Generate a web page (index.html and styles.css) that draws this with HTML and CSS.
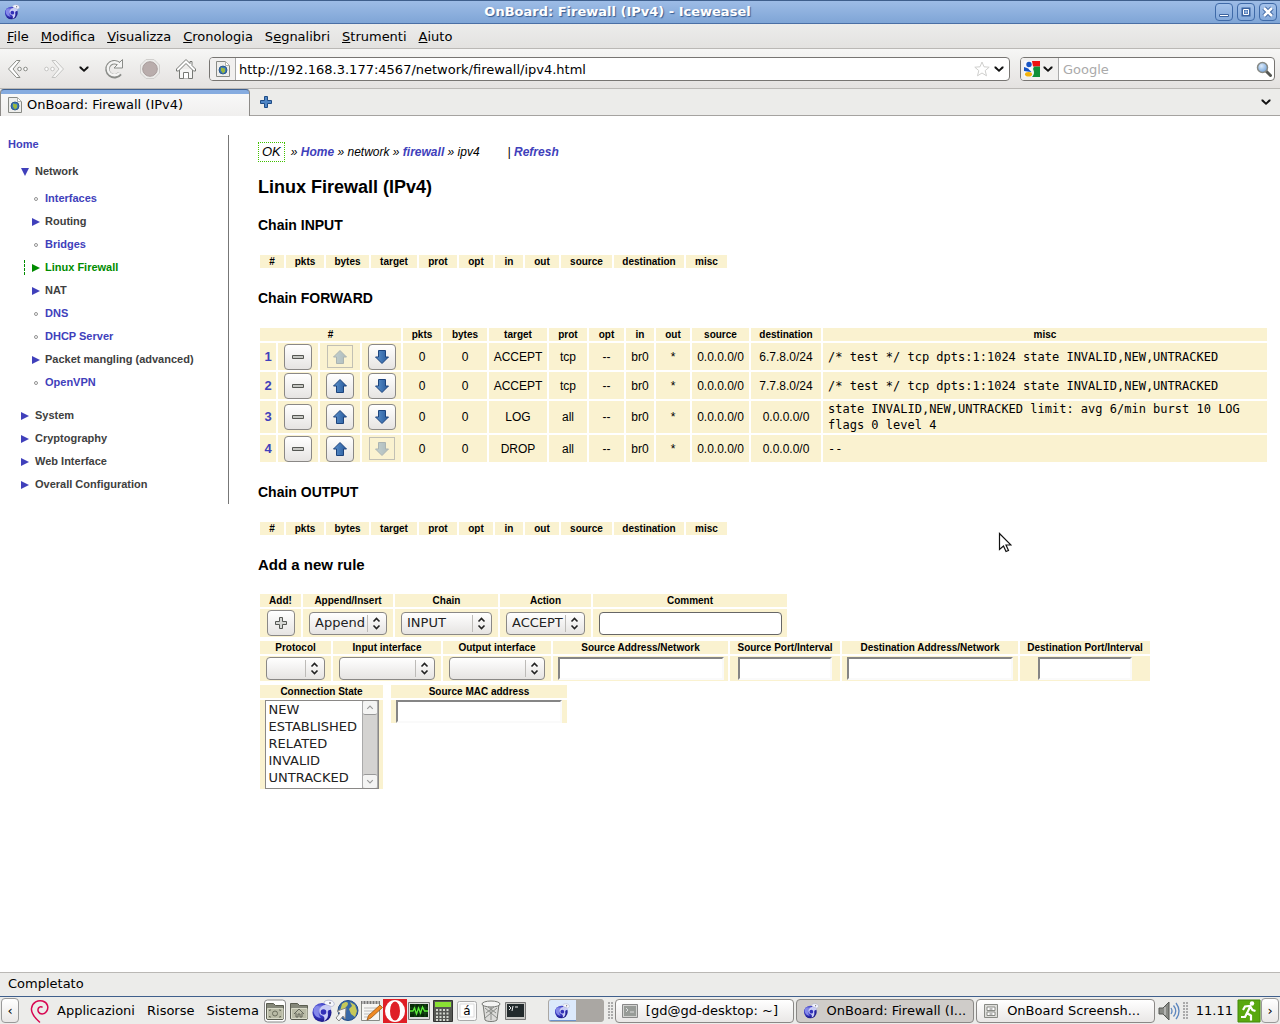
FILE: index.html
```html
<!DOCTYPE html>
<html lang="it">
<head>
<meta charset="utf-8">
<title>OnBoard: Firewall (IPv4)</title>
<link rel="stylesheet" href="styles.css">
</head>
<body>
<svg class="defs" aria-hidden="true">
  <defs>
    <linearGradient id="blueArrow" x1="0" y1="0" x2="1" y2="0"><stop offset="0" stop-color="#5c92cc"/><stop offset="1" stop-color="#275a9c"/></linearGradient>
    <radialGradient id="sphere" cx=".4" cy=".35" r=".7"><stop offset="0" stop-color="#a9adf0"/><stop offset=".5" stop-color="#3b3cc8"/><stop offset="1" stop-color="#15127a"/></radialGradient>
    <radialGradient id="lens" cx=".4" cy=".35" r=".7"><stop offset="0" stop-color="#dcebfb"/><stop offset="1" stop-color="#6d9fd8"/></radialGradient>
  </defs>
  <symbol id="i-weasel" viewBox="0 0 24 24">
    <circle cx="11" cy="13.500" r="9.500" fill="url(#sphere)"/>
    <path d="M3 9c3-4 6-2 5 1s-1 6 2 9c-5 0-9-5-7-10z" fill="#8488ea"/>
    <path d="M10 8c3-3 8-3 10 0 1 2 0 3-2 3-2 1-1 3-1 5 0 3-2 5-4 6 1-4 0-5-3-6-2-2-2-5 0-8z" fill="#c9ccf6"/>
    <circle cx="12.500" cy="13" r="2.800" fill="#3230b8"/>
    <path d="M13 3c3-3 9-2 10 1s-2 4-4 3-6-1-6-4z" fill="#f6f7fd" stroke="#9a9fc4" stroke-width=".6"/>
    <circle cx="19" cy="4" r=".8" fill="#222"/>
  </symbol>
  <symbol id="i-page" viewBox="0 0 16 18">
    <path d="M1.500 1.500h9l4 4v11h-13z" fill="#eeeeec" stroke="#888a85"/>
    <path d="M10.500 1.500v4h4z" fill="#fff" stroke="#b0b2ad"/>
    <circle cx="8" cy="10" r="4" fill="#3a77b8" stroke="#1d4a7e" stroke-width=".8"/>
    <path d="M6 7.500l4 1v3l-2 2-2-3z" fill="#9ab83c"/>
  </symbol>
  <symbol id="i-chev" viewBox="0 0 12 8"><path d="M1.500 1.500h1.500l3 3 3-3h1.500v1.500L6 7 1.500 3z" fill="#111"/></symbol>
  <symbol id="i-up" viewBox="0 0 16 16"><path d="M8 1.500l6.500 6.500h-3v6.500h-7V8h-3z" fill="url(#blueArrow)" stroke="#1c437c"/></symbol>
  <symbol id="i-down" viewBox="0 0 16 16"><path d="M8 14.500l6.500-6.500h-3V1.500h-7V8h-3z" fill="url(#blueArrow)" stroke="#1c437c"/></symbol>
  <symbol id="i-minus" viewBox="0 0 16 16"><path d="M2.500 6.500h11v3h-11z" fill="#c5c6c2" stroke="#555753"/></symbol>
  <symbol id="i-plus" viewBox="0 0 16 16"><path d="M6.500 2.500h3v4h4v3h-4v4h-3v-4h-4v-3h4z" fill="#d6d7d4" stroke="#555753"/></symbol>
  <symbol id="i-spin" viewBox="0 0 20 21"><path d="M.5 2v17" stroke="#bdbbb8"/><path d="M6.500 8.500l3-3 3 3M6.500 12.500l3 3 3-3" fill="none" stroke="#222" stroke-width="1.600"/></symbol>
  <symbol id="i-right" viewBox="0 0 8 8"><path d="M0 0l8 4-8 4z" fill="currentColor"/></symbol>
  <symbol id="i-open" viewBox="0 0 8 8"><path d="M0 0h8l-4 8z" fill="currentColor"/></symbol>
  <symbol id="i-dot" viewBox="0 0 8 8"><circle cx="4" cy="4" r="1.500" fill="none" stroke="#777" stroke-width=".8"/></symbol>
  <symbol id="i-folder" viewBox="0 0 24 24"><path d="M3.500 18V4.500h7l2 2h8V19a1.500 1.500 0 0 1-1.500 1.500H5A1.500 1.500 0 0 1 3.500 19z" fill="#85887a" stroke="#5a5d50"/><path d="M4.500 9.500h15.500v10h-15.500z" fill="#b9bba6" stroke="#d8dac8"/></symbol>
</svg>

<header class="titlebar">
  <svg class="s16"><use href="#i-weasel"/></svg>
  <span class="title">OnBoard: Firewall (IPv4) - Iceweasel</span>
  <div class="winbtns">
    <button aria-label="Riduci"><svg viewBox="0 0 16 16"><path d="M3.500 10.500h9v2h-9z" fill="#fff" stroke="#3a63a0"/></svg></button>
    <button aria-label="Ingrandisci"><svg viewBox="0 0 16 16"><path d="M5 5h6v6H5z" fill="none" stroke="#3a63a0" stroke-width="3"/><path d="M5.500 5.500h5v5h-5z" fill="none" stroke="#fff"/></svg></button>
    <button aria-label="Chiudi"><svg viewBox="0 0 16 16"><path d="M4 4l8 8M12 4l-8 8" stroke="#3a63a0" stroke-width="4.500"/><path d="M4 4l8 8M12 4l-8 8" stroke="#fff" stroke-width="2.500"/></svg></button>
  </div>
</header>

<nav class="menubar">
  <span><u>F</u>ile</span><span><u>M</u>odifica</span><span><u>V</u>isualizza</span><span><u>C</u>ronologia</span><span>S<u>e</u>gnalibri</span><span><u>S</u>trumenti</span><span><u>A</u>iuto</span>
</nav>

<div class="toolbar">
  <button class="tool" aria-label="Indietro"><svg class="s22" viewBox="0 0 22 22"><path d="M9.500 2.500h3.500l-7 8.500 7 8.500H9.500L1.500 11z" fill="#fff" stroke="#888a85"/><circle cx="12.500" cy="11" r="1.800" fill="#fff" stroke="#888a85"/><circle cx="18.500" cy="11" r="1.800" fill="#fff" stroke="#888a85"/></svg></button>
  <button class="tool fwd" aria-label="Avanti"><svg class="s22" viewBox="0 0 22 22"><path d="M12.500 2.500H9l7 8.500-7 8.500h3.500l8-8.500z" fill="#f6f6f5" stroke="#c4c4c2"/><circle cx="3.500" cy="11" r="1.800" fill="#fff" stroke="#c4c4c2"/><circle cx="9.500" cy="11" r="1.800" fill="#fff" stroke="#c4c4c2"/></svg></button>
  <button class="tool hist" aria-label="Cronologia recente"><svg class="chev"><use href="#i-chev"/></svg></button>
  <button class="tool" aria-label="Ricarica"><svg class="s22" viewBox="0 0 22 22"><path d="M17 15.500A7 7 0 1 1 15.500 5.500" fill="none" stroke="#8a8c88" stroke-width="4.500"/><path d="M19.500 1.500v8.500h-8.500z" fill="#f4f4f3" stroke="#8a8c88"/><path d="M16.500 15A6.600 6.600 0 1 1 16.500 6.500" fill="none" stroke="#f4f4f3" stroke-width="2.500"/></svg></button>
  <button class="tool" aria-label="Interrompi"><svg class="s22" viewBox="0 0 22 22"><path d="M7 1.500h8l5.500 5.500v8l-5.500 5.500H7L1.500 15V7z" fill="#ececea" stroke="#d0cfcd"/><circle cx="11" cy="11" r="7.300" fill="#b9adac" stroke="#a99d9c"/></svg></button>
  <button class="tool" aria-label="Pagina iniziale"><svg class="s22" viewBox="0 0 22 22"><path d="M4.500 11v9.500h13V11" fill="#f6f6f5" stroke="#777975"/><path d="M11 1.500L1.500 11v2h2L11 5.500l7.500 7.500h2v-2L17 7.500v-4h-2v2z" fill="#fff" stroke="#777975"/><path d="M8.500 20.500v-6h5v6" fill="#fff" stroke="#777975"/></svg></button>
  <div class="field url">
    <span class="site"><svg class="favicon"><use href="#i-page"/></svg></span>
    <input type="text" aria-label="Indirizzo" value="http://192.168.3.177:4567/network/firewall/ipv4.html">
    <svg class="s16" viewBox="0 0 16 16"><path d="M8 1l2 4.800 5.200.4-4 3.400 1.300 5.200L8 12l-4.500 2.800 1.300-5.200-4-3.400L6 5.800z" fill="#fff" stroke="#cfcfcd"/></svg>
    <svg class="chev"><use href="#i-chev"/></svg>
  </div>
  <div class="field search">
    <span class="engine"><svg class="s16" viewBox="0 0 16 16"><path d="M0 0h16v16H0z" fill="#f4f6fb"/><path d="M8 0h8v5.500H9z" fill="#ee1111"/><path d="M10 5.500h6V16H8c3-3 2-6 1-8z" fill="#109038"/><circle cx="5" cy="3.500" r="2.700" fill="#1754c4"/><path d="M0 6l3 1c3 1 5 2 4 4L0 10z" fill="#1754c4"/><path d="M5 7l3 3" stroke="#fff" stroke-width="2"/><ellipse cx="4.500" cy="13.300" rx="3.500" ry="2.300" fill="#f4b20a"/></svg><svg class="chev"><use href="#i-chev"/></svg></span>
    <input type="text" aria-label="Cerca" placeholder="Google">
    <svg class="s16" viewBox="0 0 16 16"><path d="M10 10l4.500 4.500" stroke="#555753" stroke-width="3" stroke-linecap="round"/><circle cx="6.500" cy="6.500" r="5" fill="url(#lens)" stroke="#888a85" stroke-width="1.500"/></svg>
  </div>
</div>

<div class="tabs">
  <div class="tab"><svg class="favicon"><use href="#i-page"/></svg><span>OnBoard: Firewall (IPv4)</span></div>
  <button class="tool newtab" aria-label="Nuova scheda"><svg viewBox="0 0 14 14"><path d="M5.500 1.500h3v4h4v3h-4v4h-3v-4h-4v-3h4z" fill="#4f86c6" stroke="#1f4c86"/></svg></button>
  <button class="tool alltabs" aria-label="Elenca schede"><svg class="chev"><use href="#i-chev"/></svg></button>
</div>

<div class="page">
  <nav class="sidebar">
    <a class="home" href="#">Home</a>
    <ul class="tree">
      <li><span class="node"><svg><use href="#i-open"/></svg>Network</span>
        <ul>
          <li><a class="node" href="#"><svg><use href="#i-dot"/></svg>Interfaces</a></li>
          <li><span class="node"><svg><use href="#i-right"/></svg>Routing</span></li>
          <li><a class="node" href="#"><svg><use href="#i-dot"/></svg>Bridges</a></li>
          <li><a class="node current" href="#"><svg><use href="#i-right"/></svg>Linux Firewall</a></li>
          <li><span class="node"><svg><use href="#i-right"/></svg>NAT</span></li>
          <li><a class="node" href="#"><svg><use href="#i-dot"/></svg>DNS</a></li>
          <li><a class="node" href="#"><svg><use href="#i-dot"/></svg>DHCP Server</a></li>
          <li><span class="node"><svg><use href="#i-right"/></svg>Packet mangling (advanced)</span></li>
          <li><a class="node" href="#"><svg><use href="#i-dot"/></svg>OpenVPN</a></li>
        </ul>
      </li>
      <li><span class="node"><svg><use href="#i-right"/></svg>System</span></li>
      <li><span class="node"><svg><use href="#i-right"/></svg>Cryptography</span></li>
      <li><span class="node"><svg><use href="#i-right"/></svg>Web Interface</span></li>
      <li><span class="node"><svg><use href="#i-right"/></svg>Overall Configuration</span></li>
    </ul>
  </nav>

  <main class="content">
    <div class="crumbs"><span class="ok">OK</span><span>» <a href="#">Home</a> » network » <a href="#">firewall</a> » ipv4</span><span class="refresh">| <a href="#">Refresh</a></span></div>
    <h1>Linux Firewall (IPv4)</h1>

    <h2>Chain INPUT</h2>
    <table class="grid heads">
      <colgroup><col class="w24"><col class="w38"><col class="w43"><col class="w46"><col class="w38"><col class="w34"><col class="w28"><col class="w34"><col class="w51"><col class="w70"><col class="w41"></colgroup>
      <tr><th>#</th><th>pkts</th><th>bytes</th><th>target</th><th>prot</th><th>opt</th><th>in</th><th>out</th><th>source</th><th>destination</th><th>misc</th></tr>
    </table>

    <h2>Chain FORWARD</h2>
    <table class="grid rules">
      <colgroup><col class="w16"><col class="w40"><col class="w40"><col class="w39"><col class="w38"><col class="w44"><col class="w58"><col class="w38"><col class="w35"><col class="w28"><col class="w34"><col class="w57"><col class="w70"><col></colgroup>
      <tr><th colspan="4">#</th><th>pkts</th><th>bytes</th><th>target</th><th>prot</th><th>opt</th><th>in</th><th>out</th><th>source</th><th>destination</th><th>misc</th></tr>
      <tr><td class="num">1</td><td><button class="btn" aria-label="Delete rule 1"><svg><use href="#i-minus"/></svg></button></td><td><button class="btn" disabled aria-label="Move rule 1 up"><svg><use href="#i-up"/></svg></button></td><td><button class="btn" aria-label="Move rule 1 down"><svg><use href="#i-down"/></svg></button></td><td>0</td><td>0</td><td>ACCEPT</td><td>tcp</td><td>--</td><td>br0</td><td>*</td><td>0.0.0.0/0</td><td>6.7.8.0/24</td><td class="misc">/* test */ tcp dpts:1:1024 state INVALID,NEW,UNTRACKED</td></tr>
      <tr><td class="num">2</td><td><button class="btn" aria-label="Delete rule 2"><svg><use href="#i-minus"/></svg></button></td><td><button class="btn" aria-label="Move rule 2 up"><svg><use href="#i-up"/></svg></button></td><td><button class="btn" aria-label="Move rule 2 down"><svg><use href="#i-down"/></svg></button></td><td>0</td><td>0</td><td>ACCEPT</td><td>tcp</td><td>--</td><td>br0</td><td>*</td><td>0.0.0.0/0</td><td>7.7.8.0/24</td><td class="misc">/* test */ tcp dpts:1:1024 state INVALID,NEW,UNTRACKED</td></tr>
      <tr><td class="num">3</td><td><button class="btn" aria-label="Delete rule 3"><svg><use href="#i-minus"/></svg></button></td><td><button class="btn" aria-label="Move rule 3 up"><svg><use href="#i-up"/></svg></button></td><td><button class="btn" aria-label="Move rule 3 down"><svg><use href="#i-down"/></svg></button></td><td>0</td><td>0</td><td>LOG</td><td>all</td><td>--</td><td>br0</td><td>*</td><td>0.0.0.0/0</td><td>0.0.0.0/0</td><td class="misc">state INVALID,NEW,UNTRACKED limit: avg 6/min burst 10 LOG flags 0 level 4</td></tr>
      <tr><td class="num">4</td><td><button class="btn" aria-label="Delete rule 4"><svg><use href="#i-minus"/></svg></button></td><td><button class="btn" aria-label="Move rule 4 up"><svg><use href="#i-up"/></svg></button></td><td><button class="btn" disabled aria-label="Move rule 4 down"><svg><use href="#i-down"/></svg></button></td><td>0</td><td>0</td><td>DROP</td><td>all</td><td>--</td><td>br0</td><td>*</td><td>0.0.0.0/0</td><td>0.0.0.0/0</td><td class="misc">--</td></tr>
    </table>

    <h2>Chain OUTPUT</h2>
    <table class="grid heads">
      <colgroup><col class="w24"><col class="w38"><col class="w43"><col class="w46"><col class="w38"><col class="w34"><col class="w28"><col class="w34"><col class="w51"><col class="w70"><col class="w41"></colgroup>
      <tr><th>#</th><th>pkts</th><th>bytes</th><th>target</th><th>prot</th><th>opt</th><th>in</th><th>out</th><th>source</th><th>destination</th><th>misc</th></tr>
    </table>

    <h2 class="addrule">Add a new rule</h2>
    <form>
      <table class="grid r28">
        <colgroup><col class="w41"><col class="w90"><col class="w103"><col class="w91"><col class="w194"></colgroup>
        <tr><th><label for="add">Add!</label></th><th><label for="pos">Append/Insert</label></th><th><label for="chain">Chain</label></th><th><label for="action">Action</label></th><th><label for="comment">Comment</label></th></tr>
        <tr>
          <td><button type="button" class="btn" id="add" aria-label="Add!"><svg><use href="#i-plus"/></svg></button></td>
          <td><div class="sel"><select id="pos"><option>Append</option></select><svg><use href="#i-spin"/></svg></div></td>
          <td><div class="sel"><select id="chain"><option>INPUT</option></select><svg><use href="#i-spin"/></svg></div></td>
          <td><div class="sel"><select id="action"><option>ACCEPT</option></select><svg><use href="#i-spin"/></svg></div></td>
          <td><input type="text" class="comment" id="comment"></td>
        </tr>
      </table>
      <table class="grid r25">
        <colgroup><col class="w71"><col class="w108"><col class="w108"><col class="w175"><col class="w110"><col class="w176"><col class="w130"></colgroup>
        <tr><th><label for="proto">Protocol</label></th><th><label for="iif">Input interface</label></th><th><label for="oif">Output interface</label></th><th><label for="saddr">Source Address/Network</label></th><th><label for="sport">Source Port/Interval</label></th><th><label for="daddr">Destination Address/Network</label></th><th><label for="dport">Destination Port/Interval</label></th></tr>
        <tr>
          <td><div class="sel"><select id="proto"><option></option></select><svg><use href="#i-spin"/></svg></div></td>
          <td><div class="sel"><select id="iif"><option></option></select><svg><use href="#i-spin"/></svg></div></td>
          <td><div class="sel"><select id="oif"><option></option></select><svg><use href="#i-spin"/></svg></div></td>
          <td><input type="text" class="inset" id="saddr"></td>
          <td><input type="text" class="inset port" id="sport"></td>
          <td><input type="text" class="inset" id="daddr"></td>
          <td><input type="text" class="inset port" id="dport"></td>
        </tr>
      </table>
      <div class="pair">
        <table class="grid">
          <colgroup><col class="w123"></colgroup>
          <tr><th><label for="state">Connection State</label></th></tr>
          <tr><td><div class="list"><select id="state" multiple size="5"><option>NEW</option><option>ESTABLISHED</option><option>RELATED</option><option>INVALID</option><option>UNTRACKED</option></select>
            <div class="scroll"><span><svg viewBox="0 0 14 14"><path d="M4 8.500l3-3 3 3" fill="none" stroke="#999" stroke-width="1.200"/></svg></span><span><svg viewBox="0 0 14 14"><path d="M4 5.500l3 3 3-3" fill="none" stroke="#999" stroke-width="1.200"/></svg></span></div></div></td></tr>
        </table>
        <table class="grid">
          <colgroup><col class="w176"></colgroup>
          <tr><th><label for="mac">Source MAC address</label></th></tr>
          <tr><td><input type="text" class="inset" id="mac"></td></tr>
        </table>
      </div>
    </form>
  </main>
  <svg class="pointer" viewBox="0 0 14 21"><path d="M1.500 1.500v16l4-3.500 2.500 5.500 2.500-1-2.500-5.500h5z" fill="#fff" stroke="#111" stroke-width="1.200"/></svg>
</div>

<footer class="statusbar">Completato</footer>

<div class="panel">
  <button class="edge" aria-label="Nascondi a sinistra">‹</button>
  <nav class="menus">
    <svg class="swirl" viewBox="0 0 20 24"><path d="M9.500 23C5 19 1 14 1.500 9.500 2.500 3 8 1 12.500 2 18 3.500 19 9 16.500 12.500 14 16 10 15.500 8.500 13 7 10 9 7 12 8" fill="none" stroke="#d70751" stroke-width="1.500" stroke-linecap="round"/></svg>
    <span>Applicazioni</span><span>Risorse</span><span>Sistema</span>
  </nav>
  <div class="launch">
    <svg viewBox="0 0 24 24"><rect x="1.500" y="1" width="21" height="22" rx="3" fill="#fff" stroke="#888"/><use href="#i-folder"/><circle cx="12" cy="14.500" r="2.500" fill="none" stroke="#6a6d5c"/><path d="M6.500 12v-1h1.500M17.500 12v-1H16M6.500 17v1h1.500M17.500 17v1H16" fill="none" stroke="#6a6d5c"/></svg>
    <svg viewBox="0 0 24 24"><use href="#i-folder"/><path d="M7 15l5-5 5 5M9 14v4h2v-3h2v3h2v-4" fill="none" stroke="#64675a"/></svg>
    <svg viewBox="0 0 24 24"><use href="#i-weasel"/></svg>
    <svg viewBox="0 0 24 24"><circle cx="13" cy="11.500" r="10" fill="#3768a6" stroke="#204a87"/><path d="M7 5c4-3 6-2 6 0s-3 3-3 5-4 0-5 2zM15 3l5 3 2 6-2 6-4-3-2-5 3-3z" fill="#c6c95a"/><path d="M11 9L2 12l3 2-4 5 3 3 4-5 2 3z" fill="#f4f4f4" stroke="#888"/></svg>
    <svg viewBox="0 0 24 24"><path d="M2.500 3.500h18v18h-18z" fill="#f6f6f4" stroke="#888a85"/><path d="M2 2h19v3H2z" fill="#777"/><path d="M4 2v3M7 2v3M10 2v3M13 2v3M16 2v3M19 2v3" stroke="#eee"/><path d="M5 9h13M5 12h11M5 15h8M5 18h6" stroke="#bbb"/><path d="M21 6l2.500 2.500L12 19l-4 2 1.500-4.500z" fill="#f08a24" stroke="#8a4a0a" stroke-width=".7"/></svg>
    <svg viewBox="0 0 24 24"><path d="M0 0h24v24H0z" fill="#df1f26"/><ellipse cx="12" cy="12" rx="10" ry="11" fill="#fff"/><ellipse cx="12" cy="12" rx="5" ry="9.500" fill="#df1f26"/></svg>
    <svg viewBox="0 0 24 24"><path d="M1.500 3.500h21v17h-21z" fill="#ddd" stroke="#777"/><path d="M3 5h18v13H3z" fill="#062b06"/><path d="M3 9h18M3 14h18M8 5v13M13 5v13M18 5v13" stroke="#1a4d1a"/><path d="M3 12h3l1.500-3 2 6 2-6 2 5 2-6 2 4h3.500" fill="none" stroke="#5df03a" stroke-width="1.300"/></svg>
    <svg viewBox="0 0 24 24"><path d="M2.500 1.500h19v21h-19z" fill="#555753" stroke="#333"/><path d="M4 3h16v5H4z" fill="#8ae234"/><path d="M5 11h14M5 14.500h14M5 18h14M5 21h14" stroke="#d3d7cf" stroke-width="2" stroke-dasharray="2 1.500"/></svg>
    <svg viewBox="0 0 24 24"><rect x="2.500" y="2.500" width="19" height="19" rx="2" fill="#fafafa" stroke="#aaa"/><path d="M5 5h14v13H5z" fill="#fff" stroke="#ddd"/><text x="12" y="16" class="key">á</text></svg>
    <svg viewBox="0 0 24 24"><path d="M4 5h16l-2 16c-2 2-10 2-12 0z" fill="#dcdcda" stroke="#777975"/><ellipse cx="12" cy="5" rx="9" ry="3" fill="#f4f4f3" stroke="#777975"/><path d="M6 9l12 10M18 9L6 19M9 8l8 6M15 8l-8 6M12 8v13" stroke="#8a8c88"/></svg>
    <svg viewBox="0 0 24 24"><path d="M2.500 3.500h20v17h-20z" fill="#c8c8c5" stroke="#777"/><path d="M4 5h17v13H4z" fill="#222a2c"/><path d="M6 7l2 2-2 2M10 7l-1 5M12 8h3" stroke="#eee" fill="none"/></svg>
  </div>
  <div class="spaces"><span class="here"><svg class="s16"><use href="#i-weasel"/></svg></span><span></span></div>
  <i class="grip"></i>
  <div class="tasks">
    <button><svg class="s16" viewBox="0 0 16 16"><path d="M.5 1.500h15v13H.5z" fill="#d3d3d1" stroke="#888"/><path d="M2 3h12v10H2z" fill="#979b97"/><path d="M4 5l2 2-2 2M8 9h4" stroke="#ddd" fill="none"/></svg>[gd@gd-desktop: ~]</button>
    <button class="on"><svg class="s16"><use href="#i-weasel"/></svg>OnBoard: Firewall (I...</button>
    <button class="files"><svg class="s16" viewBox="0 0 16 16"><path d="M1.500 1.500h13v13h-13z" fill="#dededb" stroke="#888a85"/><path d="M4 4h8v3.500H4zM4 9h8v3.500H4z" fill="#fff" stroke="#888a85"/><path d="M6.500 6h3M6.500 11h3" stroke="#777"/></svg>OnBoard Screensh...</button>
  </div>
  <svg class="s24" viewBox="0 0 24 24"><path d="M2 9h4l6-6v18l-6-6H2z" fill="#888a85" stroke="#555753"/><path d="M8 8v8" stroke="#ddd"/><path d="M14 9q2 3 0 6M16.500 6.500q4.500 5.500 0 11M19 4q6 8 0 16" fill="none" stroke="#5c86be" stroke-width="1.300"/></svg>
  <i class="grip"></i>
  <time>11.11</time>
  <svg class="s24" viewBox="0 0 24 24"><path d="M1 1h22v22H1z" fill="#59a80f" stroke="#458a08"/><circle cx="15" cy="4.500" r="2.200" fill="#fff"/><path d="M6 11l2-3.500 5-.5 2.500 4 3 1M13 8l-3 6 4 2.500v5M10 14l-2 4H4" fill="none" stroke="#fff" stroke-width="2.200"/></svg>
  <button class="edge" aria-label="Nascondi a destra">›</button>
</div>
</body>
</html>
```
FILE: styles.css
```css
* { box-sizing: border-box; }
body {
  margin: 0;
  min-height: 100vh;
  display: flex;
  flex-direction: column;
  background: #fff;
  color: #000;
  font: 13px/16px "DejaVu Sans", sans-serif;
}
button, input, select { font: inherit; color: inherit; margin: 0; }
svg { display: block; flex: none; }
.defs { position: absolute; width: 0; height: 0; }
.s16 { width: 16px; height: 16px; }
.s22 { width: 22px; height: 22px; }
.s24 { width: 24px; height: 24px; }
.chev { width: 12px; height: 8px; }
.favicon { width: 16px; height: 18px; }

/* Window frame */
.titlebar {
  display: flex;
  align-items: center;
  height: 24px;
  padding: 0 3px 0 4px;
  border-top: 1px solid #3f5f8c;
  border-bottom: 1px solid #4a6fa5;
  background: linear-gradient(#9dbce6, #7fa5d6);
}
.title { flex: 1; text-align: center; color: #fff; font-weight: bold; text-shadow: 1px 1px 1px #355b91; }
.winbtns { display: flex; gap: 4px; }
.winbtns button {
  width: 18px; height: 18px; padding: 0;
  border: 1px solid #3f6aa8; border-radius: 4px;
  background: linear-gradient(#a4c2ea, #84a9da);
}
.winbtns svg { width: 16px; height: 16px; }
.menubar {
  display: flex;
  gap: 12px;
  align-items: center;
  height: 25px;
  padding: 2px 7px 0;
  border-bottom: 1px solid #bab8b5;
  background: linear-gradient(#ececeb, #e3e2e0);
}
.toolbar {
  display: flex;
  align-items: center;
  height: 40px;
  padding: 0 5px 0 7px;
  border-bottom: 1px solid #bab8b5;
  background: linear-gradient(#f6f6f5, #e4e2e0);
}
.tool { padding: 0; border: 0; background: none; margin-right: 14px; }
.fwd { margin-right: 13px; }
.hist { margin-right: 13px; }
.field {
  display: flex;
  align-items: center;
  height: 24px;
  border: 1px solid #777572;
  border-radius: 4px;
  background: #fff;
  overflow: hidden;
}
.field input { flex: 1; min-width: 0; height: 22px; border: 0; padding: 1px 0 0; background: none; outline: 0; }
.field input::placeholder { color: #aaa; opacity: 1; }
.url { flex: 1; gap: 3px; padding-right: 4px; margin: 0 10px 0 -2px; }
.search { width: 255px; gap: 4px; padding-right: 2px; }
.site { width: 26px; height: 22px; padding: 2px 5px; border-right: 1px solid #aaa; background: #f1f0ef; }
.engine { display: flex; align-items: center; gap: 2px; width: 38px; height: 22px; padding: 0 3px; border-right: 1px solid #aaa; background: #f1f0ef; }
.tabs {
  display: flex;
  align-items: center;
  height: 27px;
  border-bottom: 1px solid #a5a3a0;
  background: #ececea;
}
.tab {
  display: flex;
  align-items: center;
  gap: 4px;
  width: 250px;
  height: 27px;
  padding: 4px 6px 0;
  border: 1px solid #8d8b88;
  border-top: 1px solid #3f5f8c;
  border-bottom: 0;
  border-radius: 4px 4px 0 0;
  background: linear-gradient(#86ace0 4px, #f8f8f8 4px, #f0efee);
}
.newtab { margin: 0 0 0 9px; }
.newtab svg { width: 14px; height: 14px; }
.alltabs { margin: 0 8px 0 auto; }

/* Web page */
.page {
  flex: 1;
  position: relative;
  display: flex;
  align-items: flex-start;
  padding: 19px 11px 20px 0;
  font: 12px/16px "Liberation Sans", Arial, sans-serif;
}
.page a { color: #4040bb; text-decoration: none; }
.sidebar {
  flex: none;
  width: 229px;
  padding-bottom: 8px;
  border-right: 1px solid #777;
  color: #404040;
  font-size: 11px;
  font-weight: bold;
}
.home { display: block; padding-left: 8px; line-height: 19px; }
.sidebar ul { margin: 0; padding: 0; list-style: none; }
.sidebar .tree { margin-top: 6px; }
.tree ul { padding: 4px 0 10px; }
.tree li { line-height: 23px; }
.node { display: flex; align-items: center; gap: 6px; height: 23px; padding-left: 21px; }
.node svg { width: 8px; height: 8px; color: #4040bb; }
.tree ul .node { gap: 5px; padding-left: 32px; }
.tree ul .current { height: 15px; margin: 4px 0 4px 24px; padding-left: 7px; border-left: 1px dashed #008c00; color: #008c00; }
.sidebar .current svg { color: #008c00; }

.content { flex: 1; min-width: 0; padding: 7px 0 0 29px; }
.crumbs { display: flex; align-items: center; gap: 6px; font-style: italic; }
.crumbs a { font-weight: bold; }
.ok { padding: 1px 3px; border: 1px dotted #40c000; font-size: 13px; }
.refresh { margin-left: 22px; }
h1, h2 { margin: 18px 0; font-size: 14px; line-height: 20px; }
h1 { margin-top: 15px; font-size: 18px; }
.addrule { margin-bottom: 17px; font-size: 15px; }

.grid { table-layout: fixed; width: 0; border-spacing: 2px; text-align: center; }
.rules { width: 100%; }
.grid th, .grid td { padding: 0; background: #faf2d0; }
.grid th { height: 13px; font-size: 10px; line-height: 13px; white-space: nowrap; }
.rules td { height: 27px; }
.r28 td { height: 28px; }
.r25 td { height: 25px; }
.grid .num { color: #4040bb; font-size: 13px; font-weight: bold; }
.grid .misc { padding: 0 5px; text-align: left; font-family: "DejaVu Sans Mono", monospace; }

.w16 { width: 16px; } .w24 { width: 24px; } .w28 { width: 28px; } .w34 { width: 34px; }
.w35 { width: 35px; } .w38 { width: 38px; } .w39 { width: 39px; } .w40 { width: 40px; }
.w41 { width: 41px; } .w43 { width: 43px; } .w44 { width: 44px; } .w46 { width: 46px; }
.w51 { width: 51px; } .w57 { width: 57px; } .w58 { width: 58px; } .w70 { width: 70px; }
.w71 { width: 71px; } .w90 { width: 90px; } .w91 { width: 91px; } .w103 { width: 103px; }
.w108 { width: 108px; } .w110 { width: 110px; } .w123 { width: 123px; } .w130 { width: 130px; }
.w175 { width: 175px; } .w176 { width: 176px; } .w194 { width: 194px; }

.btn {
  display: block;
  width: 28px;
  height: 26px;
  margin: 0 auto;
  padding: 4px 5px;
  border: 1px solid #8a8886;
  border-radius: 4px;
  background: linear-gradient(#fff, #e6e4e2);
}
.btn svg { width: 16px; height: 16px; }
.btn:disabled { width: 26px; height: 23px; padding: 3px 4px; border-color: #c2c0b4; border-radius: 0; background: none; }
.btn:disabled svg { opacity: .35; }
.sel { display: grid; grid-template-columns: 1fr 20px; height: 23px; margin: 0 6px; }
.sel select {
  grid-area: 1 / 1 / 2 / 3;
  appearance: none;
  min-width: 0;
  padding: 0 0 0 5px;
  border: 1px solid #8a8886;
  border-radius: 4px;
  background: linear-gradient(#fff, #e6e4e2);
  font: 13px/16px "DejaVu Sans", sans-serif;
  color: #222;
}
.sel svg { grid-area: 1 / 2; align-self: center; width: 20px; height: 21px; pointer-events: none; }
.comment { display: block; width: 183px; height: 23px; margin: 0 auto; border: 1px solid #666; border-radius: 4px; background: #fff; }
.inset {
  display: block;
  width: 166px;
  height: 23px;
  margin: 0 auto;
  border: 2px solid;
  border-color: #858585 #fafafa #fafafa #858585;
  background: #fff;
}
.port { width: 94px; }
.pair { display: flex; align-items: flex-start; gap: 4px; }
.list { display: flex; width: 114px; height: 89px; margin: 0 auto; border: 1px solid #8a8886; background: #fff; }
.list select {
  flex: 1;
  min-width: 0;
  height: 87px;
  padding: 1px 0;
  border: 0;
  outline: 0;
  background: none;
  overflow: hidden;
  font: 13px/17px "DejaVu Sans", sans-serif;
  color: #222;
}
.list option { height: 17px; min-height: 17px; padding: 0 3px; }
.scroll { display: flex; flex-direction: column; justify-content: space-between; width: 16px; border: 1px solid #aaa; border-width: 0 1px; background: #d4d3d1; }
.scroll span { height: 14px; border: 1px solid #999; border-width: 0 0 1px; border-radius: 2px; background: #f4f4f3; }
.scroll span + span { border-width: 1px 0 0; }
.scroll svg { width: 14px; height: 13px; }
.pointer { position: absolute; left: 998px; top: 416px; width: 14px; height: 21px; }

/* Status bar and desktop panel */
.statusbar { height: 25px; padding: 3px 8px; border-top: 1px solid #bab8b5; border-bottom: 1px solid #3f5f8c; background: #ececea; }
.panel { display: flex; align-items: center; height: 27px; padding: 0 1px; background: #ececea; white-space: nowrap; }
.edge { width: 18px; height: 25px; padding: 0; border: 1px solid #999; border-radius: 4px; background: linear-gradient(#fff, #e9e7e6); }
.menus { display: flex; align-items: center; gap: 12px; margin: 0 4px 0 11px; }
.swirl { width: 20px; height: 24px; margin-right: -5px; }
.launch { display: flex; }
.launch svg { width: 24px; height: 24px; }
.key { font: 12px "DejaVu Sans", sans-serif; text-anchor: middle; }
.spaces { display: flex; width: 56px; height: 23px; margin: 0 2px 0 21px; border: 1px solid #aaa7a3; border-radius: 3px; background: #aaa7a3; overflow: hidden; }
.here { width: 27px; padding: 3px 5px; background: #dce9fb; border-bottom: 1px solid #6b92cb; }
.grip { width: 5px; height: 18px; margin: 0 2px; background: radial-gradient(circle at 1px 1px, #aaa 1px, transparent 1px) 0 0 / 3px 3px; }
.tasks { display: flex; flex: 1; gap: 2px; min-width: 0; margin-right: 2px; }
.tasks button { display: flex; flex: 1; align-items: center; gap: 8px; min-width: 0; height: 24px; padding: 0 6px; border: 1px solid #8a8886; border-radius: 4px; background: linear-gradient(#fff, #e9e7e6); overflow: hidden; }
.tasks .on { background: #cfccc9; }
time { margin: 0 4px 0 6px; }
```
